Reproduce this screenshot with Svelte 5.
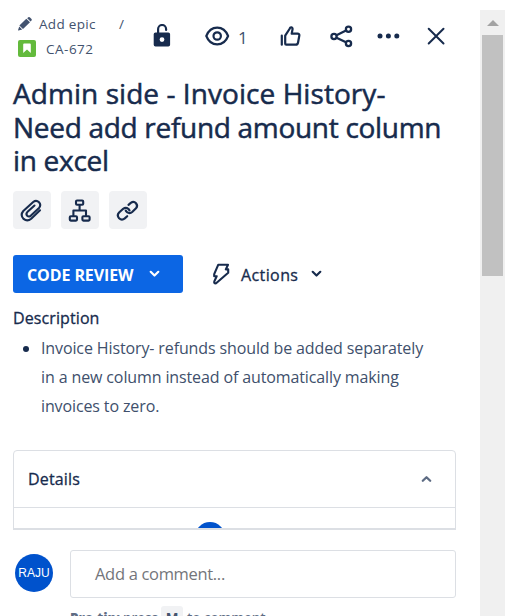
<script>
  const title = ['Admin side - Invoice History-', 'Need add refund amount column', 'in excel'];
  const description = [
    'Invoice History- refunds should be added separately',
    'in a new column instead of automatically making',
    'invoices to zero.'
  ];
</script>

<div class="page">
  <main class="issue">
    <header class="top">
      <div class="crumbs">
        <div class="crumb epic">
          <svg width="14" height="14" viewBox="0 0 14 14" fill="#42526e"><path d="M9.2 1.2 10 .5a1.4 1.4 0 0 1 2 0l1.3 1.2a1.4 1.4 0 0 1 0 2l-.8.8zM8.3 1.7 12 5.3 5 12.1 1.4 8.6zM1.2 9.4 4.2 12.4.5 13.4Q0 13.5.1 13z" /></svg>
          <span class="epic-name">Add epic</span>
          <span class="slash">/</span>
        </div>
        <div class="crumb key">
          <svg width="18" height="17" viewBox="0 0 18 17"><rect width="18" height="17" rx="2" fill="#63ba3c" /><path d="M5.2 4.5q0-.9.9-.9h5.8q.9 0 .9.9V13L9 9.6 5.2 13z" fill="#fff" /></svg>
          <span>CA-672</span>
        </div>
      </div>
      <div class="tools">
        <button class="tool lock" aria-label="Restrictions">
          <svg width="18" height="24" viewBox="0 0 18 24"><path d="M5.1 9V5a4 4 0 0 1 8 0v1" fill="none" stroke="#172b4d" stroke-width="2.2" stroke-linecap="round" /><path d="M2.5 8.5h12.8q1.8 0 1.8 1.8v10.5q0 1.8-1.8 1.8H2.5q-1.8 0-1.8-1.8V10.3q0-1.8 1.8-1.8zM9 13.2a2.4 2.4 0 1 0 0 4.8 2.4 2.4 0 0 0 0-4.8z" fill="#172b4d" fill-rule="evenodd" /></svg>
        </button>
        <button class="tool watch" aria-label="Watchers">
          <svg width="25" height="20" viewBox="0 0 25 20" fill="none" stroke="#172b4d" stroke-width="2.2"><path d="M1.3 10C3.4 4.6 7.6 1.6 12.2 1.6S21 4.6 23.1 10C21 15.4 16.8 18.4 12.2 18.4S3.4 15.4 1.3 10z" stroke-linejoin="round" /><circle cx="12.2" cy="10" r="3.7" /></svg>
          <span>1</span>
        </button>
        <button class="tool like" aria-label="Vote">
          <svg width="21" height="21" viewBox="0 0 21 21" fill="none" stroke="#172b4d" stroke-width="2.2" stroke-linecap="round" stroke-linejoin="round"><path d="M1.8 9.7v9" /><path d="M5.2 17.8V9.6L9.5 3Q10.2 1.1 11.3 1.3 13 1.7 12.4 4L11.7 7.6H17.5Q19.7 7.7 19.3 9.7L18 16.7Q17.6 18.7 15.6 18.7H6.2Q5.2 18.7 5.2 17.8z" /></svg>
        </button>
        <button class="tool share" aria-label="Share">
          <svg width="23" height="23" viewBox="0 0 23 23" fill="none" stroke="#172b4d" stroke-width="2.3"><circle cx="4" cy="11.5" r="2.6" /><circle cx="18.5" cy="4.3" r="2.6" /><circle cx="18.5" cy="18.5" r="2.6" /><path d="M6.5 10.2 16 5.5M6.5 12.8 16 17.3" /></svg>
        </button>
        <button class="tool more" aria-label="More">
          <svg width="24" height="6" viewBox="0 0 24 6" fill="#172b4d"><circle cx="3" cy="3" r="2.5" /><circle cx="11.4" cy="3" r="2.5" /><circle cx="19.8" cy="3" r="2.5" /></svg>
        </button>
        <button class="tool close" aria-label="Close">
          <svg width="18" height="18" viewBox="0 0 18 18" fill="none" stroke="#172b4d" stroke-width="2" stroke-linecap="round"><path d="M1.7 1.7 16.5 16.5M16.5 1.7 1.7 16.5" /></svg>
        </button>
      </div>
    </header>

    <section class="content">
      <h1>{#each title as line, i}<span class="t{i}">{line}</span>{/each}</h1>

      <div class="quick">
        <button aria-label="Attach">
          <svg width="38" height="38" viewBox="0 0 38 38" fill="none" stroke="#172b4d" stroke-width="2.1" stroke-linecap="round" stroke-linejoin="round"><path d="M27 19.3 18.2 27.8Q14.3 31 10.6 27.9 6.9 24.1 10.3 20L20.2 11Q23.3 8.7 26 11.3 28.5 14.1 26 17L17.7 24.8Q15.8 26.2 14.2 24.8 12.6 23 14.3 21.1L21.5 14.5" /></svg>
        </button>
        <button aria-label="Add child">
          <svg width="38" height="38" viewBox="0 0 38 38" fill="none" stroke="#172b4d" stroke-width="2.1" stroke-linejoin="round"><rect x="15" y="9.5" width="7.2" height="4.3" rx="1" /><rect x="8.8" y="25.3" width="7.2" height="4.3" rx="1" /><rect x="21.4" y="25.3" width="7.2" height="4.3" rx="1" /><path d="M18.6 14v5.5M12.4 25.2v-5.7H25v5.7" /></svg>
        </button>
        <button aria-label="Link issue">
          <svg width="38" height="38" viewBox="0 0 38 38" fill="none" stroke="#172b4d" stroke-width="2.2" stroke-linecap="round" stroke-linejoin="round"><path d="M19.5 13.8 21.8 11.9Q24.7 9.8 27 12.2 29.2 14.9 27 17.3L23.2 21Q20.8 23 18 21.1L16.8 19.7" /><path d="M18.2 25.2 15.8 27.4Q12.8 29.8 10.1 27.2 7.5 24.3 10.1 21.5L14.2 17.8Q16.8 15.9 19.5 18L20.5 19.3" /></svg>
        </button>
      </div>

      <div class="actions">
        <button class="status"><span>CODE REVIEW</span>
          <svg width="11" height="8" viewBox="0 0 11 8" fill="none" stroke="#fff" stroke-width="2.2" stroke-linecap="round" stroke-linejoin="round"><path d="M1.7 1.8 5.5 5.5 9.3 1.8" /></svg>
        </button>
        <button class="menu">
          <svg width="18" height="22" viewBox="0 0 18 22" fill="none" stroke="#172b4d" stroke-width="2.1" stroke-linejoin="round"><path d="M6.3 1.7H16L13.8 6.4H16.2V9.8L4.1 20.3Q1.7 20.8 2.3 18.4L4.7 13.2H2.2V11.1z" /></svg>
          <span>Actions</span>
          <svg width="11" height="8" viewBox="0 0 11 8" fill="none" stroke="#172b4d" stroke-width="2.2" stroke-linecap="round" stroke-linejoin="round"><path d="M1.7 1.8 5.5 5.5 9.3 1.8" /></svg>
        </button>
      </div>

      <h2>Description</h2>
      <ul>
        <li>{#each description as line, i}<span class="d{i}">{line}</span>{/each}</li>
      </ul>

      <div class="details">
        <div class="details-head">
          <span>Details</span>
          <svg width="11" height="8" viewBox="0 0 11 8" fill="none" stroke="#5e6c84" stroke-width="2.3" stroke-linecap="round" stroke-linejoin="round"><path d="M1.8 5.8 5.5 2.2 9.2 5.8" /></svg>
        </div>
        <div class="details-body"><span class="assignee"></span></div>
      </div>
    </section>

    <footer class="comment">
      <span class="avatar">RAJU</span>
      <div class="editor">
        <div class="field"><span>Add a comment...</span></div>
        <p class="tip"><b>Pro tip:</b><i>press</i><kbd>M</kbd><em>to comment</em></p>
      </div>
    </footer>
  </main>

  <aside class="scrollbar">
    <span class="arrow"></span>
    <span class="thumb"></span>
  </aside>
</div>

<style>
  .page { display: flex; width: 505px; height: 616px; overflow: hidden; background: #fff; color: #172b4d; font-family: "Open Sans", "Noto Sans", sans-serif; }
  .page * { box-sizing: border-box; }
  svg { display: block; flex: none; }
  button { border: 0; padding: 0; background: none; font: inherit; color: inherit; display: flex; align-items: center; text-align: left; }
  span, p { white-space: nowrap; }
  .issue { width: 480px; height: 616px; display: flex; flex-direction: column; overflow: hidden; }
  .top { height: 70px; flex: none; display: flex; }
  .crumbs { width: 147px; padding-top: 12px; color: #42526e; font-size: 13.5px; }
  .crumb { height: 24px; display: flex; align-items: center; padding-left: 18px; }
  .epic-name { margin-left: 7px; width: 80px; letter-spacing: .3px; }
  .key { height: 25px; }
  .key span { margin-left: 10px; letter-spacing: .5px; }
  .tools { display: flex; height: 28px; margin-top: 22px; }
  .tool { height: 28px; }
  .lock { width: 58px; padding-left: 6px; }
  .watch { width: 75px; color: #42526e; font-size: 17px; }
  .watch span { margin-left: 8px; padding-top: 2px; }
  .like { width: 50px; }
  .share { width: 47px; }
  .more { width: 50px; }
  .content { height: 460px; flex: none; padding: 7px 24px 0 13px; overflow: hidden; }
  h1 { margin: 0; font-weight: 500; font-size: 28px; line-height: 33.5px; height: 114px; -webkit-text-stroke: .5px #172b4d; }
  h1 span { display: block; letter-spacing: -.3px; }
  h1 .t0 { letter-spacing: .06px; }
  .quick { display: flex; gap: 10px; }
  .quick button { width: 38px; height: 38px; background: #f1f2f4; border-radius: 4px; }
  .actions { display: flex; margin-top: 26px; }
  .status { width: 170px; height: 38px; border-radius: 3px; background: #0c66e4; color: #fff; padding-left: 14px; font-weight: 700; font-size: 16px; }
  .status span { width: 122px; letter-spacing: -.1px; padding-top: 2px; }
  .menu { margin-left: 29px; font-weight: 500; font-size: 16px; }
  .menu span { margin-left: 11px; width: 70px; letter-spacing: .4px; padding-top: 2px; -webkit-text-stroke: .3px #172b4d; }
  h2 { margin: 13px 0 0; font-size: 16px; line-height: 24px; font-weight: 500; letter-spacing: .1px; -webkit-text-stroke: .3px #172b4d; }
  ul { margin: 4px 0 0; padding-left: 28px; font-size: 16px; line-height: 29px; height: 116px; font-weight: 400; color: #40506c; }
  li::marker { color: #172b4d; }
  li span { display: block; letter-spacing: -.12px; }
  .details { width: 443px; height: 100px; border: 1px solid #dcdfe4; border-radius: 4px; }
  .details-head { height: 57px; border-bottom: 1px solid #dcdfe4; display: flex; align-items: center; justify-content: space-between; padding: 0 23px 0 14px; font-weight: 500; font-size: 16px; letter-spacing: .15px; -webkit-text-stroke: .3px #172b4d; }
  .details-body { height: 22px; border-bottom: 2px solid #dcdfe4; display: flex; justify-content: center; padding-right: 49px; padding-top: 14px; overflow: hidden; }
  .assignee { width: 30px; height: 30px; flex: none; border-radius: 50%; background: #0052cc; }
  .comment { height: 86px; flex: none; display: flex; padding: 20px 24px 0 15px; }
  .avatar { width: 38px; height: 38px; margin-top: 4px; border-radius: 50%; background: #0052cc; color: #fff; display: flex; align-items: center; justify-content: center; font: 12px "Liberation Sans", sans-serif; }
  .editor { width: 386px; margin-left: 17px; }
  .field { height: 48px; border: 1px solid #dcdfe4; border-radius: 3px; padding: 0 0 2px 24px; display: flex; align-items: center; color: #73757a; font-size: 16.5px; letter-spacing: -.32px; }
  .tip { margin: 8px 0 0; display: flex; font-size: 13.5px; line-height: 24px; font-weight: 600; color: #5e6c84; }
  .tip b { width: 53px; }
  .tip i { width: 38px; font-style: normal; }
  .tip em { font-style: normal; letter-spacing: -.1px; }
  kbd { font: inherit; font-weight: 700; width: 22px; height: 24px; background: #f1f2f4; border-radius: 3px; text-align: center; margin-right: 4px; color: #44546f; }
  .scrollbar { width: 25px; margin-top: 10px; background: #f0f0f0; display: flex; flex-direction: column; align-items: center; }
  .arrow { margin: 10px 0 9px; border: 6px solid transparent; border-top: 0; border-bottom: 6px solid #a3a3a3; }
  .thumb { width: 21px; height: 241px; background: #c1c1c1; }
</style>
